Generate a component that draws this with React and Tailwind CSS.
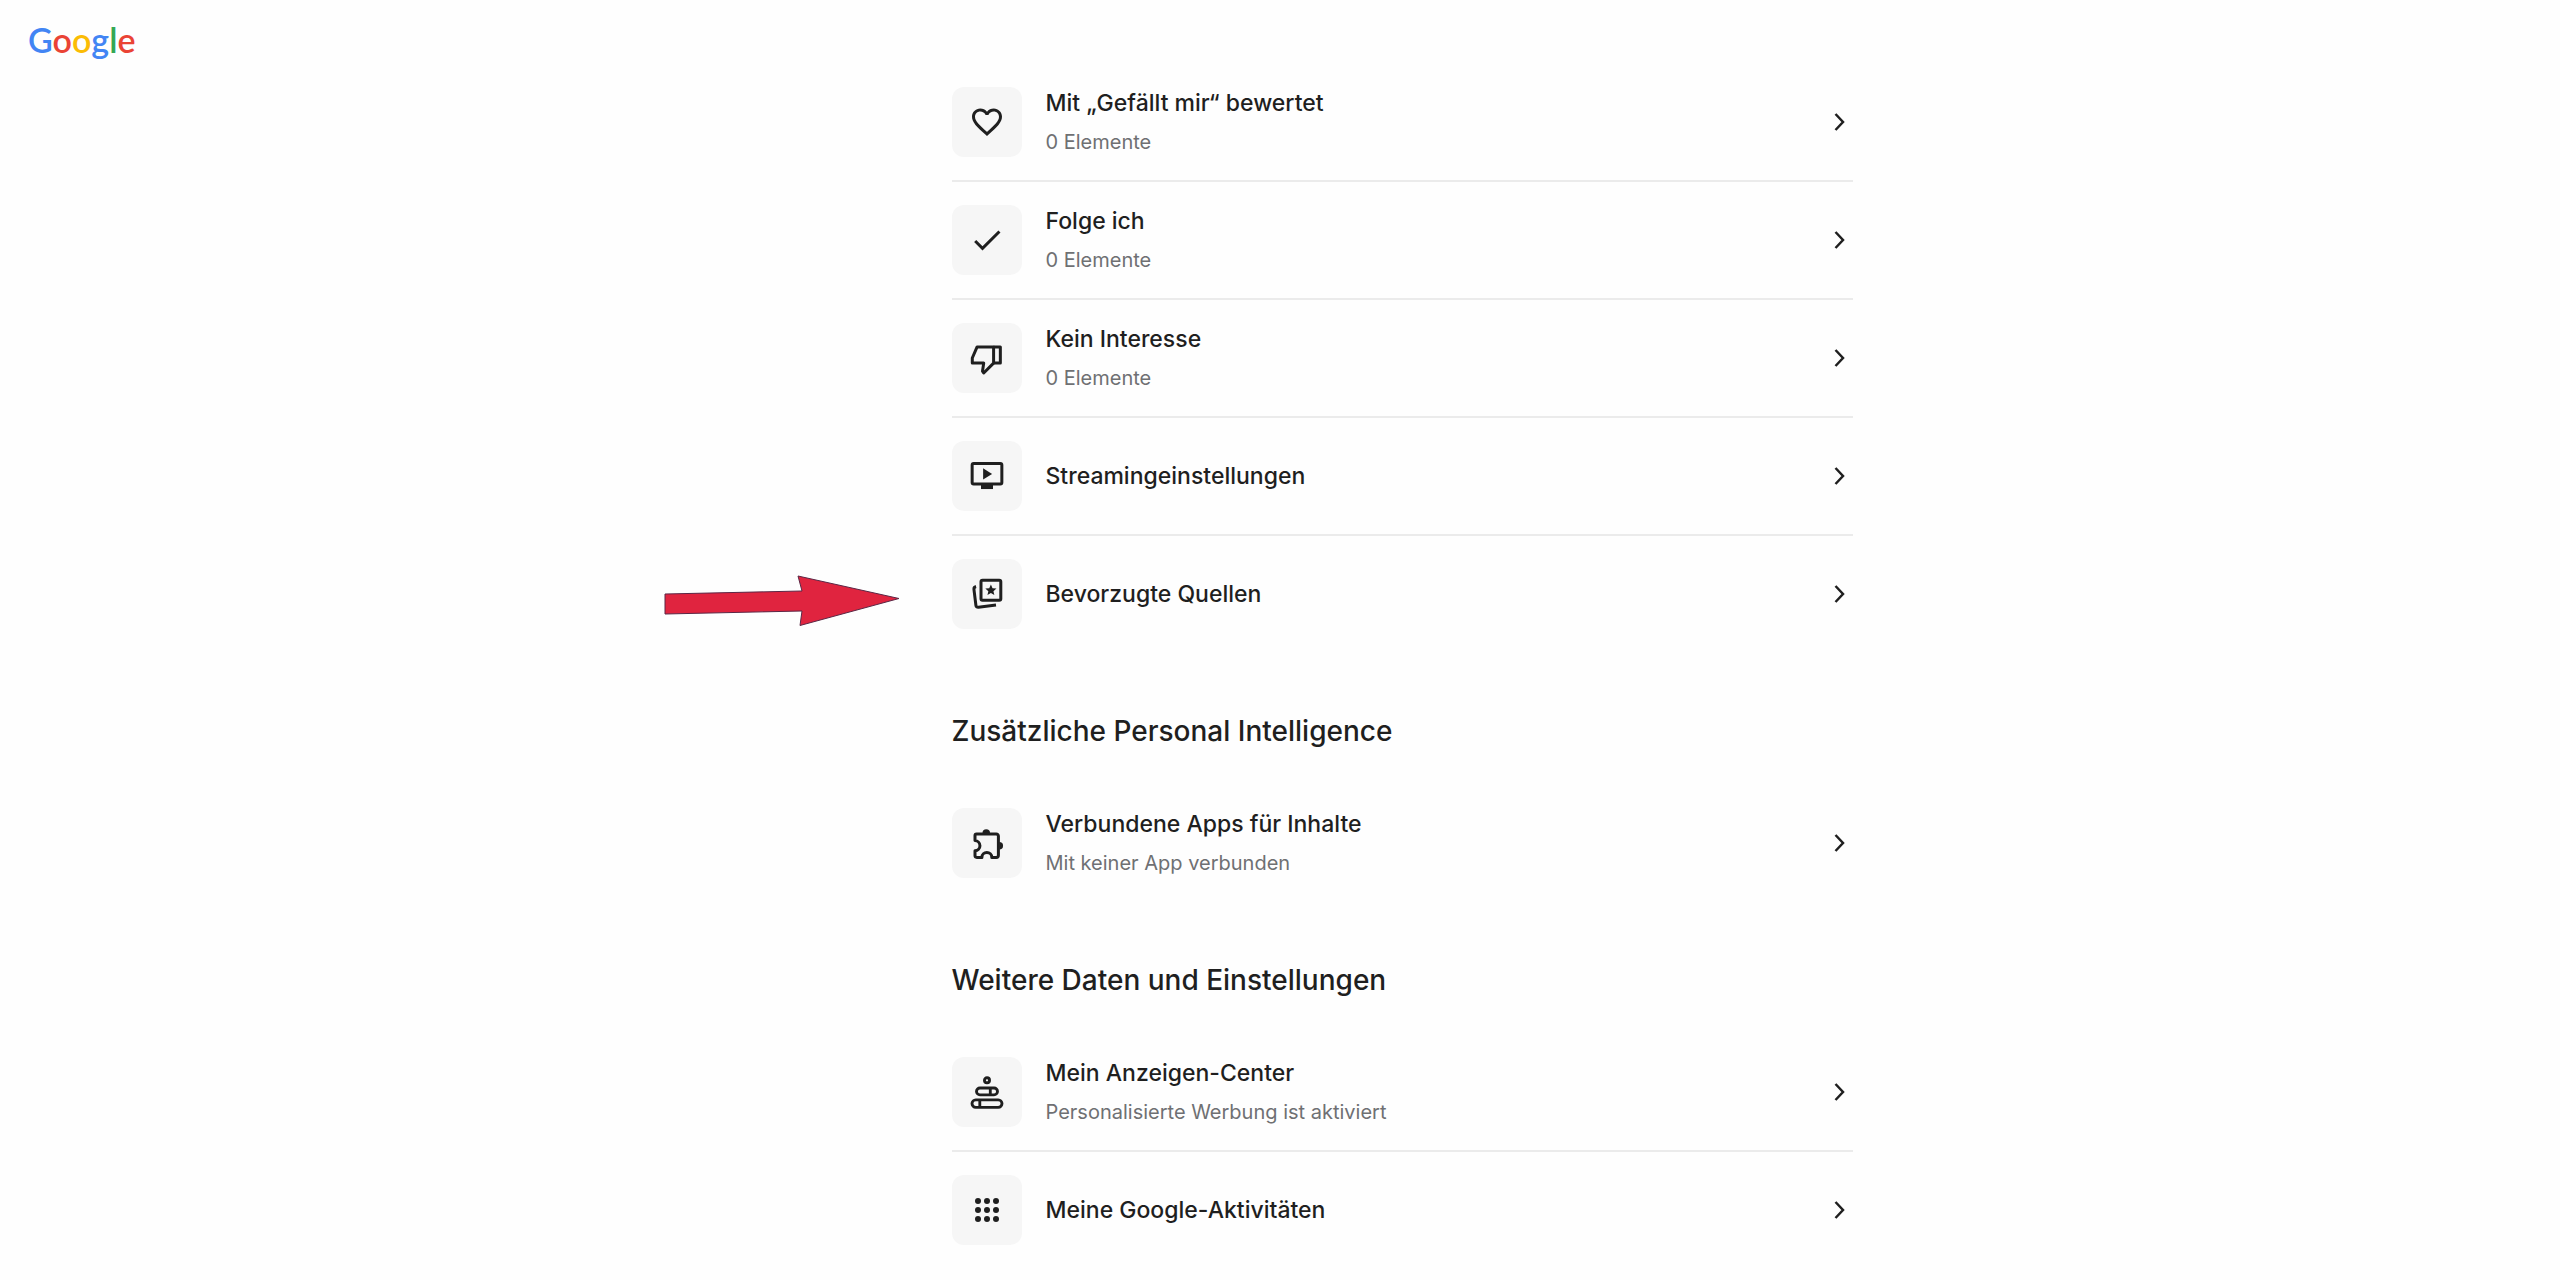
import React from 'react';
import { MdCheck, MdFavoriteBorder } from 'react-icons/md';

const LOGO = [
  { letter: 'G', color: 'text-[#4285f4]' },
  { letter: 'o', color: 'text-[#ea4335]' },
  { letter: 'o', color: 'text-[#fbbc05]' },
  { letter: 'g', color: 'text-[#4285f4]' },
  { letter: 'l', color: 'text-[#34a853]' },
  { letter: 'e', color: 'text-[#ea4335]' },
];

const ThumbDownIcon = () => (
  <svg viewBox="0 0 24 24" className="size-9" fill="none" stroke="currentColor" strokeWidth="2" strokeLinejoin="round" aria-hidden="true">
    <path d="M16.4 4.6H5.4L2.2 12v3.4h7.6L9 20.8l.8 1.2 6.6-6.6z" />
    <path d="M16.4 4.6h4.5v10.8h-4.5" />
  </svg>
);

const StreamingIcon = () => (
  <svg viewBox="0 0 24 24" className="size-9" fill="none" stroke="currentColor" strokeWidth="2" strokeLinejoin="round" aria-hidden="true">
    <rect x="2.1" y="3.6" width="19.8" height="13.8" rx="1" />
    <path d="M9.4 6.8v7.6l6-3.8z" fill="currentColor" stroke="none" />
    <path d="M8 18h8v2.7H8z" fill="currentColor" stroke="none" />
  </svg>
);

const SourcesIcon = () => (
  <svg viewBox="0 0 24 24" className="size-9" fill="none" stroke="currentColor" strokeWidth="2" strokeLinejoin="round" aria-hidden="true">
    <rect x="8" y="2.9" width="13.2" height="13.2" rx="1" />
    <path d="M4.700 7c-1.100.3-1.500.9-1.400 1.900l1.300 10.600c.1 1 .7 1.500 1.700 1.400l11.700-1.500" />
    <path
      d="m14.600 5.700 1.100 2.500 2.600.2-2 1.700.6 2.600-2.300-1.400-2.300 1.400.6-2.600-2-1.700 2.600-.2z"
      fill="currentColor"
      stroke="none"
    />
  </svg>
);

const PuzzleIcon = () => (
  <svg viewBox="0 0 24 24" className="size-9" fill="none" stroke="currentColor" strokeWidth="2" strokeLinejoin="round" aria-hidden="true">
    <path d="M5 6h13.200a1.400 1.400 0 0 1 1.400 1.400v12.800a1.400 1.400 0 0 1-1.400 1.400H15.200c0-1.900-1.500-3.200-3.300-3.200s-3.300 1.300-3.300 3.200H5.200a1.200 1.200 0 0 1-1.200-1.200V17.200c1.900-.2 3.300-1.600 3.300-3.400S5.900 10.600 4 10.400V7a1 1 0 0 1 1-1z" />
    <path d="M9 5.400a2.500 2.500 0 0 1 5 0z" fill="currentColor" stroke="none" />
    <path d="M20.200 11.300a2.500 2.500 0 0 1 0 5z" fill="currentColor" stroke="none" />
  </svg>
);

const AdsCenterIcon = () => (
  <svg viewBox="0 0 24 24" className="size-9" fill="none" stroke="currentColor" strokeWidth="1.9" aria-hidden="true">
    <circle cx="12" cy="4.200" r="1.700" />
    <rect x="5" y="9.300" width="14" height="4.600" rx="2.300" />
    <path d="M14.200 9.300v4.600" />
    <rect x="2" y="17.200" width="20" height="5" rx="2.500" />
    <path d="M7.200 17.200v5" />
  </svg>
);

const DotsIcon = () => (
  <svg viewBox="0 0 24 24" className="size-9" fill="currentColor" aria-hidden="true">
    {[6, 12, 18].map((y) => [6, 12, 18].map((x) => <circle key={`${x}-${y}`} cx={x} cy={y} r="2" />))}
  </svg>
);

const Chevron = () => (
  <svg viewBox="0 0 24 24" className="size-6 shrink-0" fill="none" stroke="currentColor" strokeWidth="2.5" aria-hidden="true">
    <path d="m6.500 4 7.500 8-7.500 8" />
  </svg>
);

// Roter Hinweispfeil links neben der markierten Zeile
const Pointer = () => (
  <svg viewBox="0 0 236 52" className="absolute top-[39px] right-full mr-[52px] h-[52px] w-[236px]" aria-hidden="true">
    <path d="M1 19 138 16 134 1 235 23.500 136 50.500 138 36 1 39z" fill="#e0243f" stroke="#5b2745" strokeWidth="1" />
  </svg>
);

const SECTIONS = [
  {
    title: null,
    items: [
      { title: 'Mit „Gefällt mir“ bewertet', sub: '0 Elemente', icon: <MdFavoriteBorder className="size-9" /> },
      { title: 'Folge ich', sub: '0 Elemente', icon: <MdCheck className="size-9" /> },
      { title: 'Kein Interesse', sub: '0 Elemente', icon: <ThumbDownIcon /> },
      { title: 'Streamingeinstellungen', icon: <StreamingIcon /> },
      { title: 'Bevorzugte Quellen', icon: <SourcesIcon />, marked: true },
    ],
  },
  {
    title: 'Zusätzliche Personal Intelligence',
    items: [{ title: 'Verbundene Apps für Inhalte', sub: 'Mit keiner App verbunden', icon: <PuzzleIcon /> }],
  },
  {
    title: 'Weitere Daten und Einstellungen',
    items: [
      { title: 'Mein Anzeigen-Center', sub: 'Personalisierte Werbung ist aktiviert', icon: <AdsCenterIcon /> },
      { title: 'Meine Google-Aktivitäten', icon: <DotsIcon /> },
    ],
  },
];

const Row = ({ item }) => (
  <li className="relative border-b-2 border-[#ebebeb] last:border-b-0">
    <a href="#" className="flex items-center gap-6 py-[23px]">
      <span className="flex size-[70px] shrink-0 items-center justify-center rounded-xl bg-[#f6f6f6]">
        {item.icon}
      </span>
      <span className="flex min-w-0 flex-1 flex-col gap-2">
        <span className="text-[23px] leading-8 font-medium">{item.title}</span>
        {item.sub && <span className="text-[20px] leading-[30px] text-[#6f7073]">{item.sub}</span>}
      </span>
      <Chevron />
    </a>
    {item.marked && <Pointer />}
  </li>
);

const App = () => (
  <div className="flex min-h-screen bg-[#fefefe] font-['Inter','Liberation_Sans',sans-serif] text-[#1f1f1f]">
    <header className="w-[244px] shrink-0 pt-5 pl-7">
      <a href="#" className="block font-['Lato',sans-serif] text-[34px] leading-10 font-semibold">
        {LOGO.map((l, i) => (
          <span key={i} className={l.color}>{l.letter}</span>
        ))}
      </a>
    </header>

    <main className="flex-1 pt-16">
      <div className="mx-auto w-full max-w-[901px]">
        {SECTIONS.map((section, i) => (
          <section key={i} className="mb-[59px] last:mb-0">
            {section.title && (
              <h2 className="mb-[34px] text-[28px] leading-10 font-medium">{section.title}</h2>
            )}
            <ul>
              {section.items.map((item) => (
                <Row key={item.title} item={item} />
              ))}
            </ul>
          </section>
        ))}
      </div>
    </main>
  </div>
);

export default App;
